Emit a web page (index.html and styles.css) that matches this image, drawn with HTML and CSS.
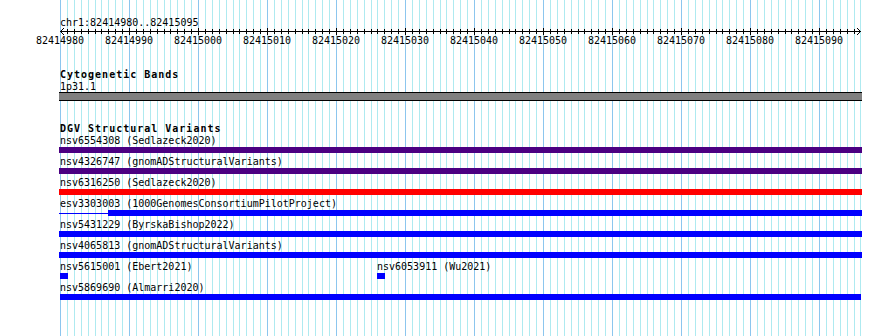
FILE: index.html
```html
<!DOCTYPE html>
<html lang="en">
<head>
  <meta charset="UTF-8">
  <title>chr1:82414980..82415095</title>
  <link rel="stylesheet" href="styles.css">
</head>
<body>
  <div class="view">
    <!-- base grid, filled in by the script below -->
    <div class="grid" id="grid"></div>

    <div class="ruler-track">
      <div class="location">chr1:82414980..82415095</div>
      <svg class="ruler" id="ruler" width="803" height="7"></svg>
      <div class="ruler-labels" id="ruler-labels"></div>
    </div>

    <div class="track cytobands">
      <div class="track-label">Cytogenetic Bands</div>
      <div class="feature-label clipped">1p31.1</div>
      <div class="band"></div>
    </div>

    <div class="track dgv">
      <div class="track-label">DGV Structural Variants</div>

      <div class="row">
        <div class="feature clipped" style="left: 0; width: 803px">
          <div class="feature-label">nsv6554308 (Sedlazeck2020)</div>
          <div class="bar indigo"></div>
        </div>
      </div>
      <div class="row">
        <div class="feature clipped" style="left: 0; width: 803px">
          <div class="feature-label">nsv4326747 (gnomADStructuralVariants)</div>
          <div class="bar indigo"></div>
        </div>
      </div>
      <div class="row">
        <div class="feature clipped" style="left: 0; width: 803px">
          <div class="feature-label">nsv6316250 (Sedlazeck2020)</div>
          <div class="bar red"></div>
        </div>
      </div>
      <div class="row">
        <div class="feature clipped" style="left: 0; width: 803px">
          <div class="feature-label">esv3303003 (1000GenomesConsortiumPilotProject)</div>
          <div class="bar split">
            <div class="gap" style="width: 49px"></div>
            <div class="block blue"></div>
          </div>
        </div>
      </div>
      <div class="row">
        <div class="feature clipped" style="left: 0; width: 803px">
          <div class="feature-label">nsv5431229 (ByrskaBishop2022)</div>
          <div class="bar blue"></div>
        </div>
      </div>
      <div class="row">
        <div class="feature clipped" style="left: 0; width: 803px">
          <div class="feature-label">nsv4065813 (gnomADStructuralVariants)</div>
          <div class="bar blue"></div>
        </div>
      </div>
      <div class="row">
        <div class="feature" style="left: 1px; width: 8px">
          <div class="feature-label">nsv5615001 (Ebert2021)</div>
          <div class="bar blue"></div>
        </div>
        <div class="feature" style="left: 318px; width: 8px">
          <div class="feature-label">nsv6053911 (Wu2021)</div>
          <div class="bar blue"></div>
        </div>
      </div>
      <div class="row">
        <div class="feature" style="left: 1px; width: 801px">
          <div class="feature-label">nsv5869690 (Almarri2020)</div>
          <div class="bar blue"></div>
        </div>
      </div>
    </div>
  </div>

  <script>
    // view shows 82414980..82415095, about 6.9px per base
    const start = 82414980;
    const bases = 116;
    const scale = 6.9;
    const origin = 1;

    const grid = document.getElementById('grid');
    const ruler = document.getElementById('ruler');
    const rulerLabels = document.getElementById('ruler-labels');

    let svg = '<line x1="1" x2="802" y1="3.5" y2="3.5"/>';
    for (let i = 0; i <= bases; i++) {
      const x = Math.round(origin + i * scale);
      const major = (start + i) % 10 === 0;

      const line = document.createElement('div');
      line.className = major ? 'gridline major' : 'gridline';
      line.style.left = x + 'px';
      grid.appendChild(line);

      if (i > 0 && i < bases) {
        svg += `<line x1="${x + 0.5}" x2="${x + 0.5}" y1="${major ? 0 : 1}" y2="${major ? 7 : 6}"/>`;
      }

      if (major) {
        const label = document.createElement('div');
        label.className = 'tick-label';
        label.textContent = start + i;
        label.style.left = (x - 30) + 'px';
        rulerLabels.appendChild(label);
      }
    }
    // arrow heads at both ends
    svg += '<polyline points="5,0 1.5,3.5 5,7"/>';
    svg += '<polyline points="798,0 801.5,3.5 798,7"/>';
    ruler.innerHTML = svg;
  </script>
</body>
</html>
```

FILE: styles.css
```css
/* page and base font */
body {
  margin: 0;
  background: #fff;
  color: #000;
  font-family: "DejaVu Sans Mono", monospace;
  font-size: 10px;
  line-height: 11px;
}

/* visible region of the genome */
.view {
  position: relative;
  margin-left: 59px;
  width: 803px;
  height: 336px;
}

/* grid lines behind the tracks */
.grid {
  position: absolute;
  top: 0;
  left: 0;
  width: 803px;
  height: 336px;
}
.gridline {
  position: absolute;
  top: 0;
  bottom: 0;
  width: 1px;
  background: #aeeaf0;
}
.gridline.major {
  background: #8cc6ee;
}

/* ruler */
.ruler-track, .track {
  position: relative;
}
.location {
  padding-top: 17px;
  padding-left: 1px;
  white-space: nowrap;
}
.ruler {
  display: block;
  overflow: visible;
  stroke: #000;
  stroke-width: 1;
  fill: none;
  shape-rendering: crispEdges;
}
.ruler-labels {
  position: relative;
  height: 11px;
}
.tick-label {
  position: absolute;
  top: 0;
  width: 60px;
  text-align: center;
}

/* tracks */
.cytobands {
  margin-top: 23px;
}
.dgv {
  margin-top: 22px;
}
.track-label {
  font-weight: bold;
  letter-spacing: 1px;
  padding-left: 1px;
  margin-bottom: 1px;
  white-space: nowrap;
}
.feature-label {
  white-space: nowrap;
}
.clipped .feature-label, .feature-label.clipped {
  padding-left: 1px;
}
.band {
  height: 7px;
  background: #808080;
  border-top: 1px solid #000;
  border-bottom: 1px solid #000;
}

/* feature rows */
.row {
  position: relative;
  height: 21px;
  overflow: hidden;
}
.feature {
  position: absolute;
  top: 0;
}
.bar {
  margin-top: 1px;
  height: 6px;
}
.bar.split {
  display: flex;
  align-items: center;
}
.bar.split .gap {
  height: 1px;
  background: #00f;
}
.bar.split .block {
  flex: 1;
  align-self: stretch;
}
.indigo {
  background: #4b0082;
}
.red {
  background: #f00;
}
.blue {
  background: #00f;
}
```
